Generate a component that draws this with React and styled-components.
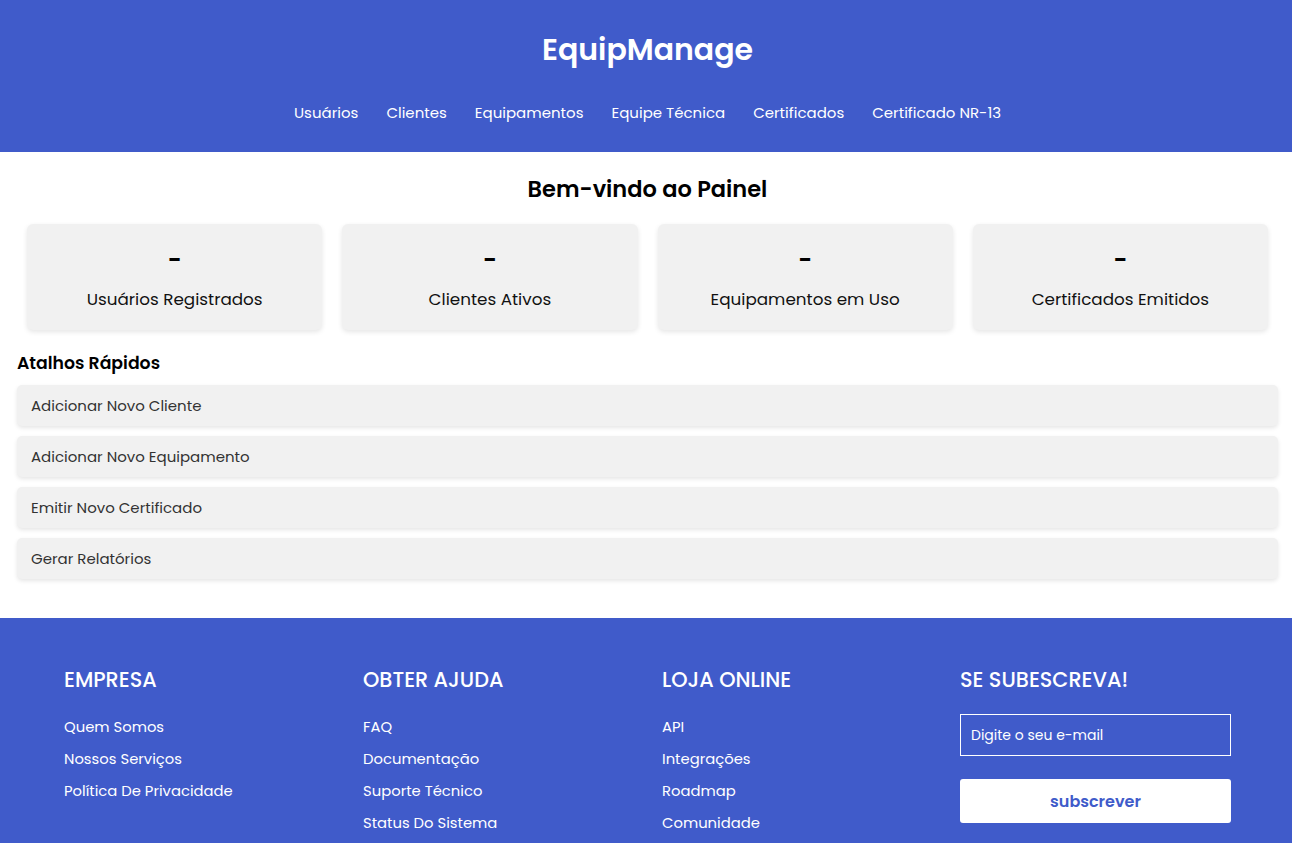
import React from 'react'
import styled, { createGlobalStyle } from 'styled-components'

const FONT = `Poppins, "Open Sans", sans-serif`
const BLUE = '#405bca'

const GlobalStyle = createGlobalStyle`
  * { box-sizing: border-box; }
  body {
    margin: 0;
    font-family: ${FONT};
    background: #fff;
  }
`

const stats = [
  { value: '-', label: 'Usuários Registrados' },
  { value: '-', label: 'Clientes Ativos' },
  { value: '-', label: 'Equipamentos em Uso' },
  { value: '-', label: 'Certificados Emitidos' },
]

const shortcuts = [
  'Adicionar Novo Cliente',
  'Adicionar Novo Equipamento',
  'Emitir Novo Certificado',
  'Gerar Relatórios',
]

const navItems = ['Usuários', 'Clientes', 'Equipamentos', 'Equipe Técnica', 'Certificados', 'Certificado NR-13']

const footerCols = [
  { title: 'EMPRESA', links: ['Quem Somos', 'Nossos Serviços', 'Política De Privacidade'] },
  { title: 'OBTER AJUDA', links: ['FAQ', 'Documentação', 'Suporte Técnico', 'Status Do Sistema'] },
  { title: 'LOJA ONLINE', links: ['API', 'Integrações', 'Roadmap', 'Comunidade'] },
]

export default function App() {
  return (
    <>
      <GlobalStyle />
      <Header>
        <Logo>EquipManage</Logo>
        <Nav>
          {navItems.map((n) => (
            <NavLink key={n}>{n}</NavLink>
          ))}
        </Nav>
      </Header>
      <Main>
        <PageTitle>Bem-vindo ao Painel</PageTitle>
        <Stats>
          {stats.map((s) => (
            <StatCard key={s.label}>
              <StatValue>{s.value}</StatValue>
              <StatLabel>{s.label}</StatLabel>
            </StatCard>
          ))}
        </Stats>
        <SectionTitle>Atalhos Rápidos</SectionTitle>
        <Shortcuts>
          {shortcuts.map((s) => (
            <Shortcut key={s}>{s}</Shortcut>
          ))}
        </Shortcuts>
      </Main>
      <Footer>
        {footerCols.map((c) => (
          <FooterCol key={c.title}>
            <FooterTitle>{c.title}</FooterTitle>
            <FooterLinks>
              {c.links.map((l) => (
                <FooterLink key={l}>{l}</FooterLink>
              ))}
            </FooterLinks>
          </FooterCol>
        ))}
        <FooterCol>
          <FooterTitle>SE SUBESCREVA!</FooterTitle>
          <EmailInput placeholder="Digite o seu e-mail" />
          <SubscribeButton>subscrever</SubscribeButton>
        </FooterCol>
      </Footer>
    </>
  )
}

const Header = styled.header`
  background: ${BLUE};
  color: #fff;
  height: 152px;
  display: flex;
  flex-direction: column;
  align-items: center;
  padding: 30px 0 0 3px;
`

const Logo = styled.h1`
  margin: 0;
  font-size: 30px;
  font-weight: 600;
  line-height: 40px;
`

const Nav = styled.nav`
  display: flex;
  gap: 28px;
  margin-top: 31px;
`

const NavLink = styled.a`
  font-size: 15px;
  color: #fff;
  line-height: 24px;
  cursor: pointer;
`

const Main = styled.main`
  padding: 21px 14px 39px 17px;
`

const PageTitle = styled.h2`
  margin: 0;
  text-align: center;
  font-size: 22.5px;
  font-weight: 600;
  line-height: 32px;
  color: #000;
`

const Stats = styled.div`
  display: flex;
  margin-top: 19px;
`

const StatCard = styled.div`
  flex: 1;
  margin: 0 10px;
  height: 106px;
  background: #f1f1f1;
  border-radius: 6px;
  box-shadow: 0 2px 5px rgba(0, 0, 0, 0.1);
  display: flex;
  flex-direction: column;
  align-items: center;
  padding-top: 20px;
`

const StatValue = styled.div`
  font-size: 24px;
  font-weight: 600;
  line-height: 32px;
  color: #000;
`

const StatLabel = styled.div`
  font-size: 16.8px;
  line-height: 26px;
  margin-top: 10px;
  color: #111;
`

const SectionTitle = styled.h3`
  margin: 20px 0 0;
  font-size: 17.3px;
  font-weight: 600;
  line-height: 26px;
  color: #000;
`

const Shortcuts = styled.div`
  display: flex;
  flex-direction: column;
  gap: 10px;
  margin-top: 9px;
`

const Shortcut = styled.div`
  height: 41px;
  background: #f1f1f1;
  border-radius: 5px;
  box-shadow: 0 2px 4px rgba(0, 0, 0, 0.1);
  display: flex;
  align-items: center;
  padding: 0 14px;
  font-size: 15px;
  color: #333;
`

const Footer = styled.footer`
  background: ${BLUE};
  color: #fff;
  display: grid;
  grid-template-columns: 299px 299px 298px 300px;
  padding: 50px 64px 20px;
`

const FooterCol = styled.div`
  display: flex;
  flex-direction: column;
  align-items: flex-start;
`

const FooterTitle = styled.h4`
  margin: 0;
  font-size: 20.8px;
  font-weight: 500;
  line-height: 24px;
`

const FooterLinks = styled.div`
  display: flex;
  flex-direction: column;
  gap: 10px;
  margin-top: 24px;
`

const FooterLink = styled.a`
  font-size: 14.8px;
  line-height: 22px;
  color: #fff;
  cursor: pointer;
`

const EmailInput = styled.input`
  margin-top: 22px;
  width: 271px;
  height: 42px;
  background: transparent;
  border: 1px solid #fff;
  padding: 0 10px;
  font-family: ${FONT};
  font-size: 14px;
  color: #fff;
  outline: none;
  &::placeholder { color: #fff; }
`

const SubscribeButton = styled.button`
  margin-top: 23px;
  width: 271px;
  height: 44px;
  background: #fff;
  border: none;
  border-radius: 3px;
  font-family: ${FONT};
  font-size: 16px;
  font-weight: 600;
  color: ${BLUE};
  cursor: pointer;
`
